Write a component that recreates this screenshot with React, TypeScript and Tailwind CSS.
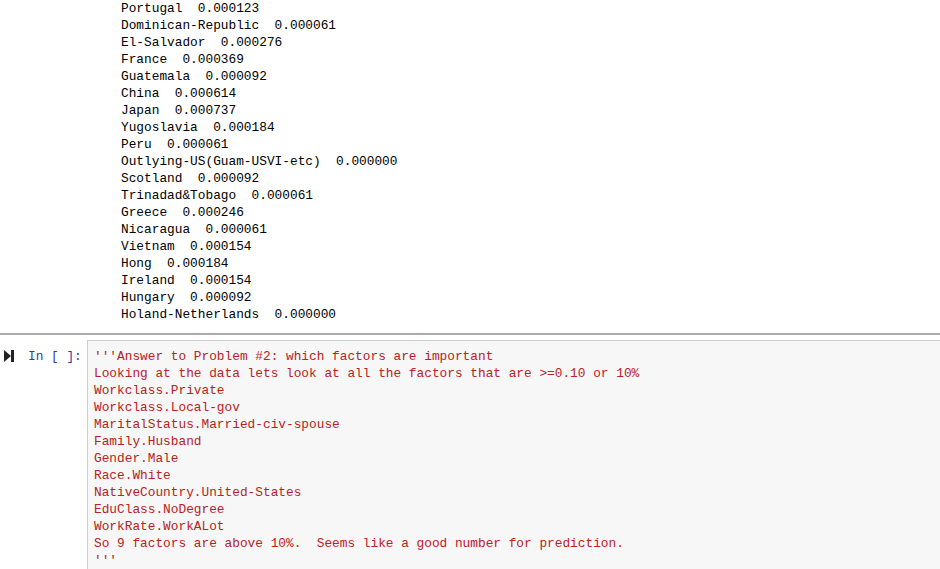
const rows: [string, string][] = [
  ["Portugal", "0.000123"],
  ["Dominican-Republic", "0.000061"],
  ["El-Salvador", "0.000276"],
  ["France", "0.000369"],
  ["Guatemala", "0.000092"],
  ["China", "0.000614"],
  ["Japan", "0.000737"],
  ["Yugoslavia", "0.000184"],
  ["Peru", "0.000061"],
  ["Outlying-US(Guam-USVI-etc)", "0.000000"],
  ["Scotland", "0.000092"],
  ["Trinadad&Tobago", "0.000061"],
  ["Greece", "0.000246"],
  ["Nicaragua", "0.000061"],
  ["Vietnam", "0.000154"],
  ["Hong", "0.000184"],
  ["Ireland", "0.000154"],
  ["Hungary", "0.000092"],
  ["Holand-Netherlands", "0.000000"],
];

const code = [
  "'''Answer to Problem #2: which factors are important",
  "Looking at the data lets look at all the factors that are >=0.10 or 10%",
  "Workclass.Private",
  "Workclass.Local-gov",
  "MaritalStatus.Married-civ-spouse",
  "Family.Husband",
  "Gender.Male",
  "Race.White",
  "NativeCountry.United-States",
  "EduClass.NoDegree",
  "WorkRate.WorkALot",
  "So 9 factors are above 10%.  Seems like a good number for prediction.",
  "'''",
];

const mono = "font-['Liberation_Mono','DejaVu_Sans_Mono',monospace] text-[12.8px] leading-[17px]";

export default function App() {
  return (
    <div className="h-[569px] w-[940px] overflow-hidden bg-white">
      <div className={`pl-[121px] text-black whitespace-pre ${mono}`}>
        {rows.map(([k, v]) => (
          <div key={k}>{`${k}  ${v}`}</div>
        ))}
      </div>

      <div className="mt-[10px] h-[2px] bg-[#ababab]" />

      <div className="mt-[5px] flex">
        <div className="flex w-[87px] shrink-0 items-start pt-[10px]">
          <svg width="10" height="12" viewBox="0 0 10 12" className="ml-[4px]">
            <path d="M0 0 L7 6 L0 12 Z" fill="#222" />
            <rect x="7" y="0" width="3" height="12" fill="#222" />
          </svg>
          <span className={`ml-[14px] whitespace-pre text-[#303f9f] ${mono} -mt-[2px]`}>In [ ]:</span>
        </div>
        <div className="flex-1 border-l border-t border-[#cfcfcf] bg-[#f7f7f7] pb-[10px] pl-[6px] pt-[7px]">
          <div className={`whitespace-pre text-[#ba2121] ${mono}`}>
            {code.map((l, i) => (
              <div key={i}>{l}</div>
            ))}
          </div>
        </div>
      </div>
    </div>
  );
}
